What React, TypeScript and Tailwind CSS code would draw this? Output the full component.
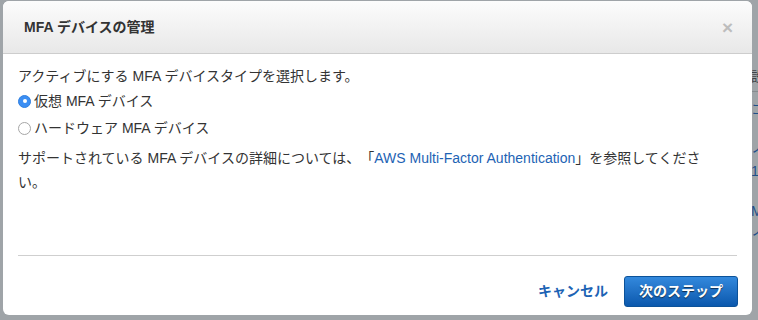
import React, { useState } from 'react';

const font = { fontFamily: '"Liberation Sans", "Noto Sans CJK JP", sans-serif' };

const Radio: React.FC<{ checked: boolean; label: string; onSelect: () => void }> = ({
  checked,
  label,
  onSelect,
}) => (
  <label className="flex items-center h-[26px] cursor-pointer" onClick={onSelect}>
    {checked ? (
      <span className="w-[13px] h-[13px] rounded-full bg-[#3b8ef3] border border-[#2f7fe0] flex items-center justify-center mr-[3px]">
        <span className="w-[4px] h-[4px] rounded-full bg-white" />
      </span>
    ) : (
      <span className="w-[13px] h-[13px] rounded-full bg-white border border-[#a6a6a6] mr-[3px]" />
    )}
    <span>{label}</span>
  </label>
);

export default function App() {
  const [device, setDevice] = useState<'virtual' | 'hardware'>('virtual');

  return (
    <div className="relative w-[758px] h-[320px] overflow-hidden bg-[#9fa4a8] text-[#333]" style={font}>
      {/* dimmed page behind the dialog */}
      <div className="flex flex-col pl-[751px] pt-[67px] text-[14px] leading-[18px] text-[#3e4246] whitespace-nowrap">
        <span>設</span>
        <div className="border-t border-[#878b8f] mt-[6px] w-[7px]" />
        <span className="mt-[8px] text-[#1f4f88]">コ</span>
        <span className="mt-[20px] text-[#1f4f88]">ノ</span>
        <span className="mt-[6px] text-[#1f4f88]">1</span>
        <span className="mt-[22px] text-[#1f4f88]">M</span>
        <span className="mt-[1px] text-[#1f4f88]">ノ</span>
      </div>

      {/* dialog */}
      <div className="absolute left-[3px] top-[1px] w-[749px] h-[314px] bg-white rounded-[6px] flex flex-col overflow-hidden">
        <div className="h-[53px] shrink-0 flex items-center justify-between pl-[21px] pr-[19px] bg-gradient-to-b from-[#fcfcfc] to-[#e8e8e8] border-b border-[#cdcdcd]">
          <h2 className="text-[14px] font-bold text-[#333]">MFA デバイスの管理</h2>
          <button className="text-[#bdbdbd] text-[19px] font-bold leading-none">×</button>
        </div>

        <div className="flex-1 px-[15px] pt-[10px] text-[14px] leading-[24px] [text-spacing-trim:space-all]">
          <p>アクティブにする MFA デバイスタイプを選択します。</p>
          <Radio checked={device === 'virtual'} label="仮想 MFA デバイス" onSelect={() => setDevice('virtual')} />
          <div className="mt-[1px]">
            <Radio checked={device === 'hardware'} label="ハードウェア MFA デバイス" onSelect={() => setDevice('hardware')} />
          </div>
          <p className="mt-[5px]">
            サポートされている MFA デバイスの詳細については、「
            <a href="#" className="text-[#1d63b4]">AWS Multi-Factor Authentication</a>
            」を参照してくださ
            <br />
            い。
          </p>
        </div>

        <div className="mx-[15px] border-t border-[#cfcfcf]" />

        <div className="h-[59px] shrink-0 flex items-start justify-end gap-[16px] pt-[20px] pr-[14px]">
          <a href="#" className="h-[31px] flex items-center text-[14px] font-bold text-[#1d63b4]">キャンセル</a>
          <button className="w-[114px] h-[31px] rounded-[3px] border border-[#0c5299] bg-gradient-to-b from-[#3389dd] to-[#0a58ad] text-white text-[14px] font-bold [text-shadow:0_1px_1px_rgba(0,0,0,0.6)]">
            次のステップ
          </button>
        </div>
      </div>
    </div>
  );
}
